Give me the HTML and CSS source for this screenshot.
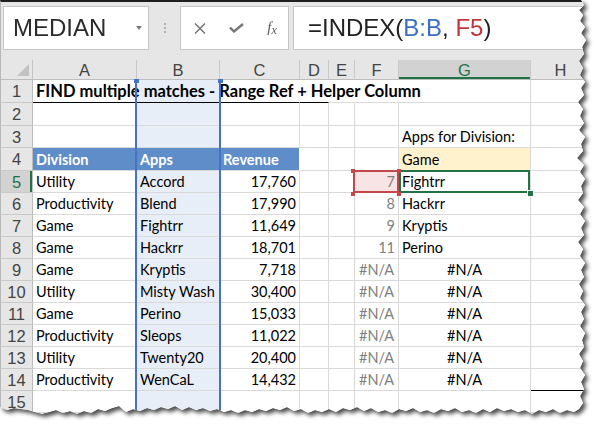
FILE: index.html
```html
<!DOCTYPE html>
<html lang="en">
<head>
    <meta charset="UTF-8">
    <meta name="viewport" content="width=device-width, initial-scale=1.0">
    <title>FIND multiple matches - Range Ref + Helper Column</title>
    <link rel="stylesheet" href="styles.css">
</head>
<body>
    <div class="paper">
        <div class="sheet">
            <div class="toolbar">
                <div class="name-box">
                    <span class="name">MEDIAN</span>
                    <span class="caret"></span>
                </div>
                <div class="grip"><i></i><i></i><i></i></div>
                <div class="fx-buttons">
                    <svg width="12" height="11" viewBox="0 0 12 11"><path d="M1 0.5 L11 10.5 M11 0.5 L1 10.5" stroke="#6e6e6e" stroke-width="1.4" fill="none"/></svg>
                    <svg width="15" height="10" viewBox="0 0 15 10"><path d="M1 4.5 L5 8.5 L14 1" stroke="#767676" stroke-width="2.4" fill="none"/></svg>
                    <span class="fx">f<span class="fx-x">x</span></span>
                </div>
                <div class="formula">=INDEX(<span class="ref-b">B:B</span>, <span class="ref-f">F5</span>)</div>
            </div>

            <div class="grid" id="grid">
                <div class="corner"><span class="corner-tri"></span></div>
                <div class="col-head">A</div>
                <div class="col-head">B</div>
                <div class="col-head">C</div>
                <div class="col-head">D</div>
                <div class="col-head">E</div>
                <div class="col-head">F</div>
                <div class="col-head active">G</div>
                <div class="col-head">H</div>
                <div class="col-sel"></div>
            </div>
        </div>
    </div>

    <script>
        // Sheet data
        const apps = [
            ['Utility', 'Accord', '17,760'],
            ['Productivity', 'Blend', '17,990'],
            ['Game', 'Fightrr', '11,649'],
            ['Game', 'Hackrr', '18,701'],
            ['Game', 'Kryptis', '7,718'],
            ['Utility', 'Misty Wash', '30,400'],
            ['Game', 'Perino', '15,033'],
            ['Productivity', 'Sleops', '11,022'],
            ['Utility', 'Twenty20', '20,400'],
            ['Productivity', 'WenCaL', '14,432']
        ];
        const helper = ['7', '8', '9', '11'];
        const results = ['Fightrr', 'Hackrr', 'Kryptis', 'Perino'];

        const grid = document.getElementById('grid');

        function addCell(text, cls) {
            const cell = document.createElement('div');
            cell.className = 'cell ' + (cls || '');
            if (text) {
                const span = document.createElement('span');
                span.textContent = text;
                cell.appendChild(span);
            }
            grid.appendChild(cell);
            return cell;
        }

        for (let r = 1; r <= 15; r++) {
            const head = document.createElement('div');
            head.className = 'row-head' + (r === 5 ? ' active' : '');
            head.textContent = r;
            grid.appendChild(head);

            if (r === 1) {
                addCell('FIND multiple matches - Range Ref + Helper Column', 'title flow rule');
                addCell('', 'col-b flow rule');
                addCell('', 'flow rule');
                addCell('', 'flow rule');
                addCell('', 'flow');
                addCell('', 'flow');
                addCell('', '');
                addCell('', '');
            } else if (r === 4) {
                addCell('Division', 'th');
                addCell('Apps', 'th');
                addCell('Revenue', 'th');
                addCell('', '');
                addCell('', '');
                addCell('', '');
                addCell('Game', 'crit');
                addCell('', '');
            } else if (r >= 5 && r <= 14) {
                const i = r - 5;
                const row = apps[i];
                addCell(row[0], '');
                addCell(row[1], 'col-b');
                addCell(row[2], 'num');
                addCell('', '');
                addCell('', '');
                if (i < 4) {
                    addCell(helper[i], 'help num' + (r === 5 ? ' pick' : ''));
                    addCell(results[i], r === 5 ? 'current' : '');
                } else {
                    addCell('#N/A', 'help err');
                    addCell('#N/A', 'err');
                }
                addCell('', r === 14 ? 'rule' : '');
            } else {
                addCell('', '');
                addCell('', 'col-b');
                addCell('', '');
                addCell('', '');
                addCell('', '');
                addCell('', '');
                addCell(r === 3 ? 'Apps for Division:' : '', '');
                addCell('', '');
            }
        }
    </script>
</body>
</html>
```

FILE: styles.css
```css
* {
    margin: 0;
    padding: 0;
    box-sizing: border-box;
}

html, body {
    width: 594px;
    height: 429px;
    overflow: hidden;
    background-color: #ffffff;
}

.paper {
    width: 594px;
    height: 429px;
    filter: drop-shadow(3px 3px 2px rgba(0, 0, 0, 0.7));
}

.sheet {
    width: 594px;
    height: 429px;
    background-color: #ffffff;
    overflow: hidden;
    clip-path: polygon(
        0 0, 581px 0, 584px 5px, 579px 10px, 583px 15px, 580px 21px, 585px 27px, 581px 33px,
        586px 40px, 582px 47px, 584px 54px, 579px 61px, 583px 68px, 580px 75px, 585px 82px,
        581px 88px, 584px 95px, 578px 102px, 583px 109px, 580px 116px, 584px 123px, 579px 130px,
        585px 137px, 581px 144px, 583px 151px, 577px 158px, 584px 165px, 580px 172px, 585px 179px,
        581px 186px, 583px 193px, 578px 200px, 584px 207px, 580px 214px, 585px 221px, 581px 228px,
        584px 235px, 578px 242px, 583px 249px, 580px 256px, 585px 263px, 581px 270px, 584px 277px,
        579px 284px, 583px 291px, 580px 298px, 585px 305px, 581px 312px, 584px 319px, 580px 326px,
        585px 333px, 582px 340px, 584px 347px, 579px 354px, 583px 361px, 580px 368px, 585px 375px,
        581px 382px, 584px 389px, 580px 396px, 583px 403px, 579px 409px,
        574px 412px, 567px 410px, 560px 413px, 553px 409px, 546px 412px, 539px 410px, 532px 414px,
        525px 410px, 518px 412px, 511px 409px, 504px 411px, 497px 408px, 490px 412px, 483px 409px,
        476px 413px, 469px 410px, 462px 412px, 455px 408px, 448px 411px, 441px 409px, 434px 413px,
        427px 410px, 420px 412px, 413px 408px, 406px 411px, 399px 409px, 392px 413px, 385px 410px,
        378px 412px, 371px 408px, 364px 411px, 357px 407px, 350px 410px, 343px 408px, 336px 412px,
        329px 409px, 322px 412px, 315px 410px, 308px 413px, 301px 409px, 294px 411px, 287px 407px,
        280px 410px, 273px 408px, 266px 411px, 259px 409px, 252px 412px, 245px 410px, 238px 413px,
        231px 410px, 224px 412px, 217px 409px, 210px 411px, 203px 408px, 196px 410px, 189px 407px,
        182px 410px, 175px 406px, 168px 409px, 161px 407px, 154px 410px, 147px 408px, 140px 411px,
        133px 409px, 126px 412px, 119px 406px, 112px 408px, 105px 411px, 98px 409px, 91px 413px,
        84px 411px, 77px 414px, 70px 411px, 63px 413px, 56px 410px, 49px 412px, 42px 414px,
        35px 412px, 28px 410px, 21px 409px, 14px 408px, 7px 410px, 0 407px
    );
}

/* Formula bar */
.toolbar {
    height: 60px;
    display: flex;
    align-items: flex-start;
    padding-top: 4px;
    background-color: #e6e6e6;
    border-top: 2px solid #1e1e1e;
    border-left: 1px solid #b8b8b8;
}

.name-box {
    position: relative;
    width: 146px;
    height: 44px;
    margin-left: 2px;
    display: flex;
    align-items: center;
    background-color: #ffffff;
    border: 1px solid #c6c6c6;
}

.name {
    padding-left: 9px;
    font-family: "Liberation Sans", Arial, sans-serif;
    font-size: 24px;
    color: #2b2b2b;
}

.caret {
    position: absolute;
    right: 6px;
    top: 19px;
    width: 0;
    height: 0;
    border-left: 3.5px solid transparent;
    border-right: 3.5px solid transparent;
    border-top: 4px solid #7a7a7a;
}

.grip {
    width: 31px;
    height: 44px;
    display: flex;
    flex-direction: column;
    align-items: center;
    justify-content: center;
    gap: 2px;
}

.grip i {
    width: 2px;
    height: 2px;
    background-color: #b0b0b0;
}

.fx-buttons {
    width: 109px;
    height: 44px;
    display: grid;
    grid-template-columns: repeat(3, 36px);
    align-items: center;
    justify-items: center;
    padding-left: 1px;
    background-color: #ffffff;
    border: 1px solid #c6c6c6;
}

.fx {
    font-family: "Liberation Serif", "Times New Roman", serif;
    font-style: italic;
    font-size: 15px;
    color: #5a5a5a;
    margin-top: -2px;
}

.fx-x {
    font-size: 12px;
    position: relative;
    top: 2px;
}

.formula {
    flex: 1;
    height: 44px;
    margin-left: 4px;
    display: flex;
    align-items: center;
    padding-left: 14px;
    white-space: pre;
    background-color: #ffffff;
    border: 1px solid #c6c6c6;
    font-family: "Liberation Sans", Arial, sans-serif;
    font-size: 24px;
    color: #222222;
}

.ref-b {
    color: #3b6fc4;
}

.ref-f {
    color: #c4353b;
}

/* Worksheet grid */
.grid {
    position: relative;
    display: grid;
    grid-template-columns: 33px 104px 83px 80px 29px 26px 44px 132px 60px;
    grid-template-rows: 20px 23px 23px 22px 23px repeat(11, 22px);
    background-color: #ffffff;
    font-family: Lato, "Noto Sans", sans-serif;
    font-size: 14.5px;
    color: #000000;
}

.corner {
    position: relative;
    background-color: #e6e6e6;
    border-right: 1px solid #c4c4c4;
    border-bottom: 1px solid #bdbdbd;
    border-left: 1px solid #b8b8b8;
}

.corner-tri {
    position: absolute;
    right: 3px;
    bottom: 3px;
    width: 0;
    height: 0;
    border-left: 12px solid transparent;
    border-bottom: 12px solid #c2c2c2;
}

.col-head {
    display: flex;
    align-items: center;
    justify-content: center;
    padding-top: 1px;
    background-color: #e6e6e6;
    border-right: 1px solid #c9c9c9;
    border-bottom: 1px solid #bdbdbd;
    font-family: "Liberation Sans", Arial, sans-serif;
    font-size: 16.5px;
    color: #444444;
}

.col-head.active {
    background-color: #d2d2d2;
    color: #217346;
    box-shadow: inset 0 -2px 0 #217346;
}

.row-head {
    display: flex;
    align-items: center;
    justify-content: center;
    padding-top: 1px;
    background-color: #e6e6e6;
    border-left: 1px solid #b8b8b8;
    border-right: 1px solid #bdbdbd;
    border-bottom: 1px solid #c9c9c9;
    font-family: "Liberation Sans", Arial, sans-serif;
    font-size: 16.5px;
    color: #444444;
}

.row-head.active {
    background-color: #d2d2d2;
    color: #217346;
    box-shadow: inset -2px 0 0 #217346;
}

.cell {
    position: relative;
    display: flex;
    align-items: flex-end;
    padding: 0 3px 2px 3px;
    line-height: 17px;
    white-space: nowrap;
    border-right: 1px solid #d9d9d9;
    border-bottom: 1px solid #d9d9d9;
}

.cell span {
    position: relative;
    z-index: 2;
}

.flow {
    border-right-color: transparent;
}

.rule {
    border-bottom-color: #000000;
}

.title {
    font-weight: 700;
    font-size: 16.5px;
    overflow: visible;
}

.col-b {
    background-color: #e8eef8;
}

.th {
    background-color: #5f8dc9;
    border-right-color: #ffffff;
    color: #ffffff;
    font-weight: 700;
}

.crit {
    background-color: #fff2cc;
}

.num {
    justify-content: flex-end;
}

.help {
    color: #7f7f7f;
}

.err {
    justify-content: center;
}

/* Selections */
.col-sel {
    position: absolute;
    top: 20px;
    left: 135px;
    width: 86px;
    bottom: 0;
    border-left: 2px solid #4472c4;
    border-right: 2px solid #4472c4;
    z-index: 3;
    pointer-events: none;
}

.col-sel::before,
.col-sel::after {
    content: "";
    position: absolute;
    top: -1px;
    width: 5px;
    height: 4px;
    background-color: #4472c4;
}

.col-sel::before {
    left: -3.5px;
}

.col-sel::after {
    right: -3.5px;
}

.pick {
    background-color: #f8e4e4;
}

.pick::after {
    content: "";
    position: absolute;
    top: -1px;
    left: -2px;
    right: -1px;
    bottom: -1px;
    border: 2px solid #c4474a;
    z-index: 3;
}

.pick::before {
    content: "";
    position: absolute;
    top: -2px;
    left: -4px;
    width: 4px;
    height: 4px;
    background-color: #c4474a;
    box-shadow: 46px 0 #c4474a, 0 23px #c4474a, 46px 23px #c4474a;
    z-index: 4;
}

.current::after {
    content: "";
    position: absolute;
    top: -1px;
    left: 0;
    right: 0;
    bottom: -1px;
    border: 2px solid #217346;
    z-index: 3;
}

.current::before {
    content: "";
    position: absolute;
    right: -3px;
    bottom: -4px;
    width: 5px;
    height: 5px;
    background-color: #217346;
    outline: 1px solid #ffffff;
    z-index: 4;
}
```
